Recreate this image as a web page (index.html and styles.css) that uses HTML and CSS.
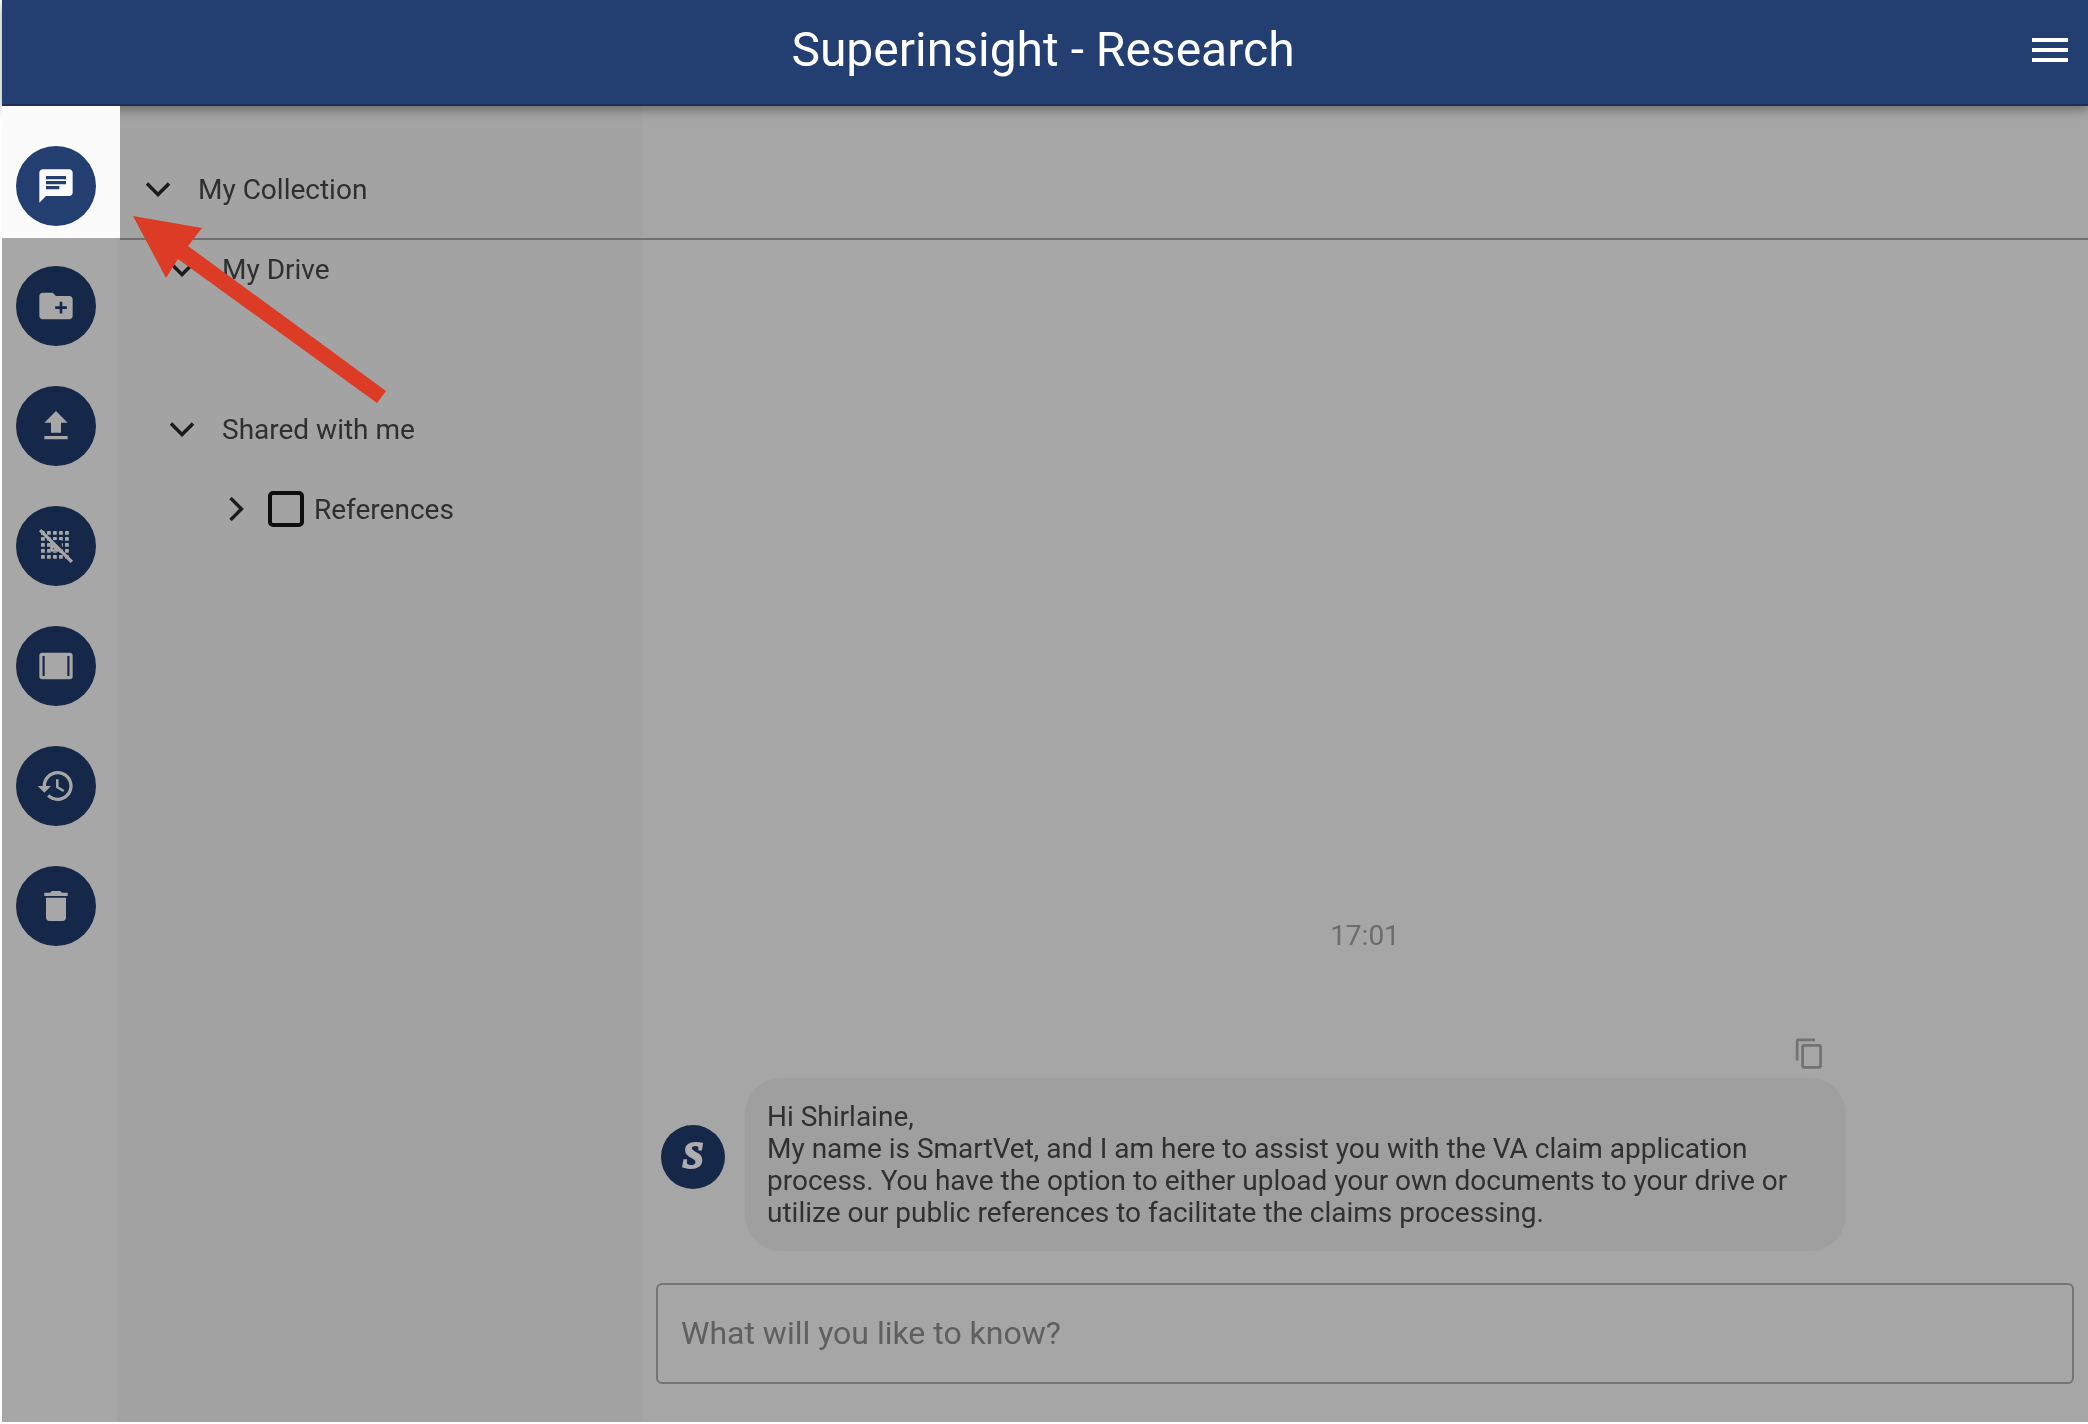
FILE: index.html
```html
<!DOCTYPE html>
<html lang="en">
<head>
<meta charset="utf-8">
<title>Superinsight - Research</title>
<link rel="stylesheet" href="styles.css">
</head>
<body>
<div class="app">
  <header class="topbar">
    <h1 class="title">Superinsight - Research</h1>
    <button class="menu" aria-label="Menu"><span></span><span></span><span></span></button>
  </header>
  <main class="workspace">
    <nav class="rail">
      <a class="tool tool-active"><svg viewBox="0 0 24 24"><path d="M20 2H4c-1.100 0-2 .9-2 2v18l4-4h14c1.100 0 2-.9 2-2V4c0-1.100-.9-2-2-2zM6 9h12v2H6V9zm8 5H6v-2h8v2zm4-6H6V6h12v2z"/></svg></a>
      <a class="tool"><svg viewBox="0 0 24 24"><path fill-rule="evenodd" d="M20 6h-8l-2-2H4c-1.110 0-1.990.89-1.990 2L2 18c0 1.110.89 2 2 2h16c1.110 0 2-.89 2-2V8c0-1.110-.89-2-2-2zm-1.500 7.800h-2.700v2.700h-1.600v-2.700h-2.700v-1.600h2.700V9.500h1.600v2.700h2.700v1.600z"/></svg></a>
      <a class="tool"><svg viewBox="0 0 24 24"><path d="M9 16h6v-6h4l-7-7-7 7h4zm-4 2h14v2H5z"/></svg></a>
      <a class="tool"><svg viewBox="0 0 24 24"><defs><pattern id="dots" width="3.600" height="3.600" patternUnits="userSpaceOnUse" x="3" y="3"><rect width="2.300" height="2.300" rx=".4" class="dot"/></pattern></defs><rect x="3" y="3" width="18" height="18" fill="url(#dots)"/><rect x="8.500" y="8.500" width="7" height="7" class="well"/><path d="M8.500 9.500v6h6zm1.800 4.400v-.9l.9.900z" fill-rule="evenodd"/><path class="slash" d="M2.500 2.500 21.500 21.500"/></svg></a>
      <a class="tool"><svg viewBox="0 0 24 24"><path fill-rule="evenodd" d="M3.500 4h17C21.300 4 22 4.700 22 5.500v13c0 .8-.7 1.500-1.500 1.500h-17C2.700 20 2 19.300 2 18.500v-13C2 4.700 2.700 4 3.500 4zM3.900 6v12h1.300V6H3.900zM18.800 6v12h1.300V6h-1.300z"/></svg></a>
      <a class="tool"><svg viewBox="0 0 24 24"><path d="M13 3c-4.970 0-9 4.030-9 9H1l3.890 3.890.07.140L9 12H6c0-3.870 3.130-7 7-7s7 3.130 7 7-3.130 7-7 7c-1.930 0-3.680-.79-4.940-2.060l-1.420 1.420C8.270 19.990 10.510 21 13 21c4.970 0 9-4.030 9-9s-4.030-9-9-9zm-1 5v5l4.280 2.540.72-1.210-3.500-2.080V8H12z"/></svg></a>
      <a class="tool"><svg viewBox="0 0 24 24"><path d="M6 19c0 1.100.9 2 2 2h8c1.100 0 2-.9 2-2V7H6v12zM19 4h-3.500l-1-1h-5l-1 1H5v2h14V4z"/></svg></a>
    </nav>
    <section class="tree">
      <div class="tree-row level-0"><svg class="chev" viewBox="0 0 24 24"><path d="M1 6.500 12 17.500 23 6.500"/></svg><span>My Collection</span></div>
      <div class="tree-row level-1"><svg class="chev" viewBox="0 0 24 24"><path d="M1 6.500 12 17.500 23 6.500"/></svg><span>My Drive</span></div>
      <div class="tree-gap"></div>
      <div class="tree-row level-1"><svg class="chev" viewBox="0 0 24 24"><path d="M1 6.500 12 17.500 23 6.500"/></svg><span>Shared with me</span></div>
      <div class="tree-row level-2"><svg class="chev-right" viewBox="0 0 24 24"><path d="M6.500 1 17.500 12 6.500 23"/></svg><i class="check"></i><span>References</span></div>
    </section>
    <section class="chat">
      <time class="stamp">17:01</time>
      <div class="copy-row"><svg class="copy" viewBox="0 0 24 24"><path d="M16 1H4c-1.100 0-2 .9-2 2v14h2V3h12V1zm3 4H8c-1.100 0-2 .9-2 2v14c0 1.100.9 2 2 2h11c1.100 0 2-.9 2-2V7c0-1.100-.9-2-2-2zm0 16H8V7h11v14z"/></svg></div>
      <div class="message">
        <div class="avatar">S</div>
        <p class="bubble">Hi Shirlaine,<br>My name is SmartVet, and I am here to assist you with the VA claim application process. You have the option to either upload your own documents to your drive or utilize our public references to facilitate the claims processing.</p>
      </div>
      <div class="prompt">What will you like to know?</div>
    </section>
  </main>
  <div class="spot"><a class="tool tool-active"><svg viewBox="0 0 24 24"><path d="M20 2H4c-1.100 0-2 .9-2 2v18l4-4h14c1.100 0 2-.9 2-2V4c0-1.100-.9-2-2-2zM6 9h12v2H6V9zm8 5H6v-2h8v2zm4-6H6V6h12v2z"/></svg></a></div>
  <div class="rule"></div>
  <svg class="arrow" viewBox="0 0 2088 1424"><polygon points="133,216 202,228 188,246 386,391 377,403 178,259 166,278"/></svg>
</div>
</body>
</html>
```
FILE: styles.css
```css
* { box-sizing: border-box; }
html, body { margin: 0; height: 100%; background: #fff; }
body { font-family: Roboto, "Liberation Sans", sans-serif; overflow: hidden; }
.app { position: relative; height: 1422px; margin-left: 2px; display: flex; flex-direction: column; background: #a6a6a6; filter: blur(.6px); }
.topbar { position: relative; z-index: 2; flex: none; height: 106px; background: #233e70; border-bottom: 2px solid #1b2f57; box-shadow: 0 4px 10px rgba(0,0,0,.35); display: flex; align-items: center; justify-content: center; color: #fff; }
.title { margin: 0 0 4px; font-size: 48px; font-weight: 400; line-height: 1; transform: translateX(-2px); }
.menu { position: absolute; right: 20px; top: 38px; width: 36px; padding: 0; border: 0; background: none; display: flex; flex-direction: column; gap: 6px; }
.menu span { height: 4px; background: #fff; }
.workspace { flex: 1; min-height: 0; display: flex; }
.rail { flex: none; width: 115px; background: #a7a7a7; padding: 40px 0 0 14px; display: flex; flex-direction: column; gap: 40px; }
.tool { flex: none; width: 80px; height: 80px; border-radius: 50%; background: #152849; display: flex; align-items: center; justify-content: center; }
.tool svg { width: 40px; height: 40px; fill: #a7a7a7; }
.tool .slash { fill: none; stroke: #a7a7a7; stroke-width: 2; }
.tool .dot { fill: #a7a7a7; }
.tool .well { fill: #152849; }
.tool-active { background: #233e70; }
.tool-active svg { fill: #fbfbfb; }
.tree { flex: none; width: 525px; background: #a3a3a3; padding-top: 43px; color: #2f2f2f; font-size: 28px; }
.tree-row { height: 80px; display: flex; align-items: center; }
.tree-gap { height: 80px; }
.level-0 { padding-left: 29px; }
.level-0 .chev { margin-right: 28px; }
.level-1 { padding-left: 53px; }
.level-2 { padding-left: 107px; }
.chev { width: 24px; height: 24px; margin-right: 28px; fill: none; stroke: #1c1c1c; stroke-width: 3.4; }
.chev-right { width: 24px; height: 24px; margin-right: 20px; fill: none; stroke: #1c1c1c; stroke-width: 3.4; }
.check { flex: none; width: 36px; height: 36px; margin-right: 10px; border: 4px solid #0e0e0e; border-radius: 5px; }
.chat { flex: 1; min-width: 0; display: flex; flex-direction: column; justify-content: flex-end; padding: 0 14px 38px 14px; }
.stamp { align-self: center; margin: 0 0 85px; font-size: 28px; line-height: 32px; color: #6c6c6c; }
.copy-row { display: flex; justify-content: flex-end; padding-right: 248px; margin-bottom: 8px; }
.copy { width: 33px; height: 33px; fill: #727272; }
.message { display: flex; align-items: flex-start; gap: 20px; padding-left: 5px; margin-bottom: 32px; }
.avatar { flex: none; width: 64px; height: 64px; margin-top: 47px; border-radius: 50%; background: #152849; color: #aeaeae; font: italic 700 38px/60px "Liberation Serif", serif; -webkit-text-stroke: 2px #aeaeae; text-align: center; }
.bubble { flex: none; width: 1101px; height: 173px; margin: 0; padding: 23px 22px; border-radius: 36px; background: #9f9f9f; color: #303030; font-size: 28px; line-height: 32px; }
.prompt { height: 101px; border: 2px solid #747474; border-radius: 6px; padding: 0 0 2px 23px; display: flex; align-items: center; font-size: 32px; color: #5f5f5f; }
.spot { position: absolute; z-index: 3; left: 0; top: 106px; width: 118px; height: 132px; background: #fbfbfb; padding: 40px 0 0 14px; }
.rule { position: absolute; z-index: 3; left: 118px; right: 0; top: 238px; height: 2px; background: #707070; }
.arrow { position: absolute; z-index: 4; left: -2px; top: 0; width: 2088px; height: 1424px; fill: #dc3c25; pointer-events: none; }
```
